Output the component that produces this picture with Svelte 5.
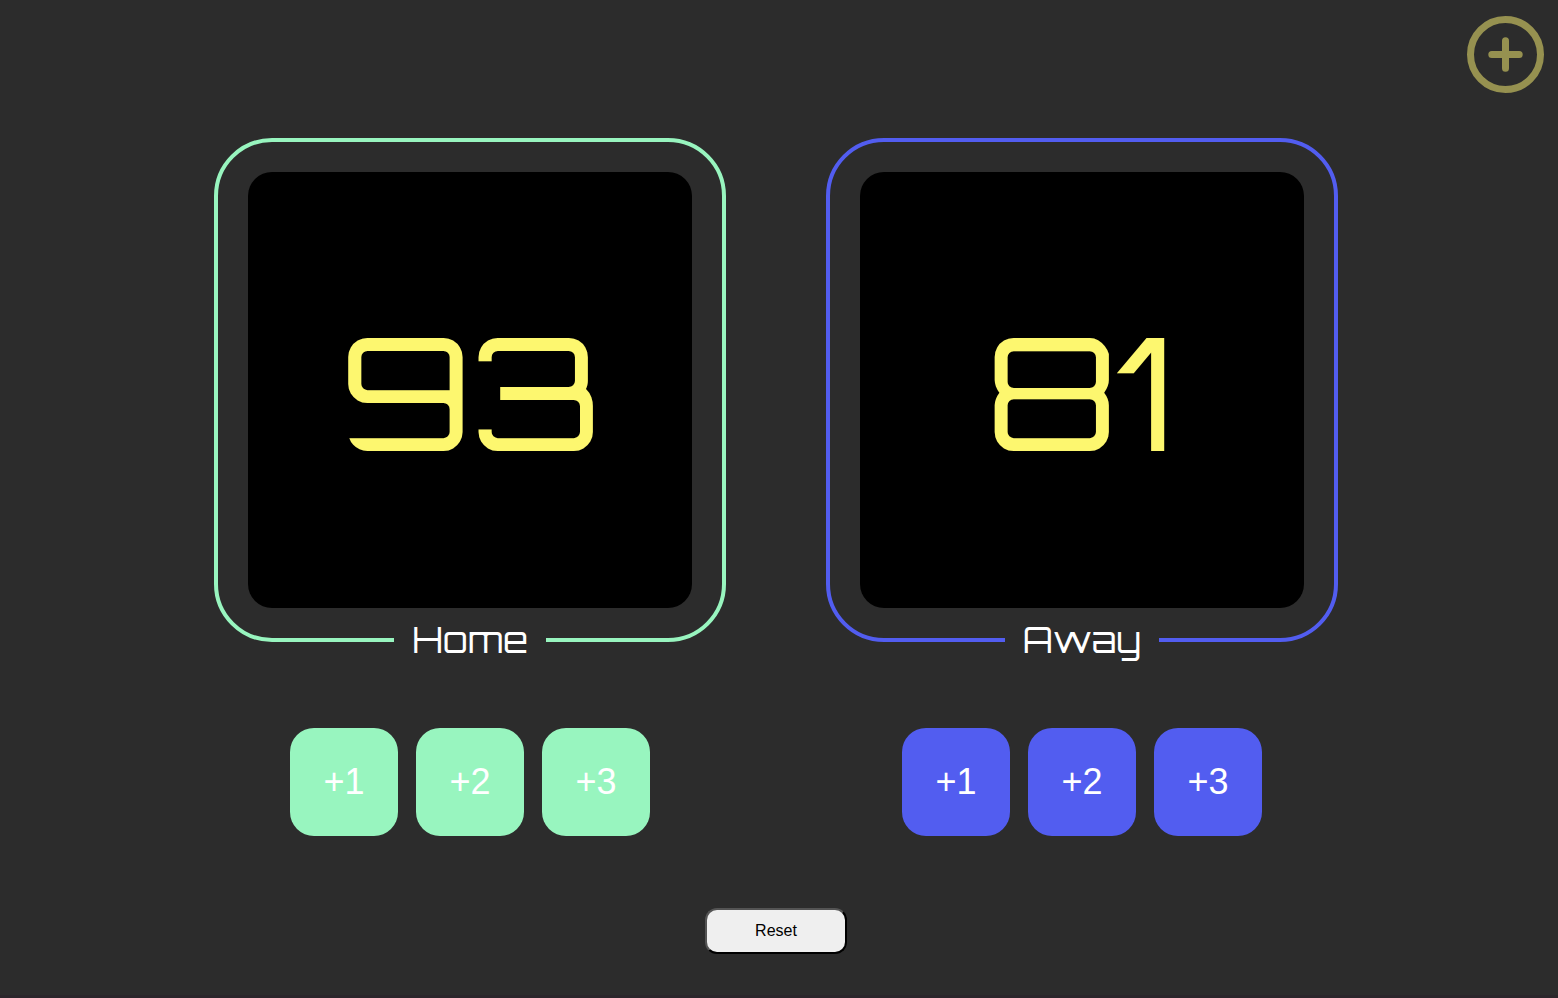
<script>
  let teams = $state([
    { id: 'home', name: 'Home', score: 93 },
    { id: 'away', name: 'Away', score: 81 },
  ]);
  const steps = [1, 2, 3];

  function reset() {
    for (const team of teams) team.score = 0;
  }
</script>

<div class="page">
  <header>
    <button class="add" aria-label="Add">
      <svg viewBox="0 0 77 77" aria-hidden="true">
        <circle cx="38.5" cy="38.5" r="35" />
        <path d="M38.5 24.8v27.4M24.8 38.5h27.4" />
      </svg>
    </button>
  </header>

  <main>
    <div class="teams">
      {#each teams as team (team.id)}
        <section class="team {team.id}">
          <div class="frame">
            <div class="screen">{team.score}</div>
            <h2>{team.name}</h2>
          </div>
          <div class="steps">
            {#each steps as step}
              <button class="step" onclick={() => (team.score += step)}>+{step}</button>
            {/each}
          </div>
        </section>
      {/each}
    </div>
    <button class="reset" onclick={reset}>Reset</button>
  </main>
</div>

<style>
  :global(body) {
    margin: 0;
    background: #2c2c2c;
  }

  .page {
    box-sizing: border-box;
    min-height: 100vh;
    border-bottom: 3px solid #2b262b;
    font-family: 'Liberation Sans', Arial, sans-serif;
  }

  header {
    display: flex;
    justify-content: flex-end;
    padding: 16px 14px 0;
  }

  .add {
    width: 77px;
    height: 77px;
    padding: 0;
    border: 0;
    background: none;
    cursor: pointer;
  }

  .add svg {
    display: block;
    fill: none;
    stroke: #969150;
    stroke-width: 7;
    stroke-linecap: round;
  }

  main {
    display: flex;
    flex-direction: column;
    align-items: center;
    gap: 72px;
    padding: 45px 6px 40px 0;
  }

  .teams {
    display: flex;
    flex-wrap: wrap;
    justify-content: center;
    gap: 72px 100px;
  }

  .team {
    display: flex;
    flex-direction: column;
    align-items: center;
    gap: 86px;
  }

  .home {
    --team: #98f5bf;
  }

  .away {
    --team: #525df0;
  }

  .frame {
    display: flex;
    flex-direction: column;
    align-items: center;
    padding: 30px 30px 0;
    border: 4px solid var(--team);
    border-radius: 58px;
  }

  .screen {
    display: grid;
    place-items: center;
    width: 444px;
    height: 436px;
    border-radius: 24px;
    background: #000;
    color: #fdf76f;
    font: 157px/1 Orbitron, 'DejaVu Sans', sans-serif;
  }

  h2 {
    margin: 10px 0 -24px;
    padding: 0 18px;
    background: #2c2c2c;
    color: #fff;
    font: 36px/44px Orbitron, 'DejaVu Sans', sans-serif;
    text-align: center;
  }

  .steps {
    display: flex;
    gap: 18px;
  }

  .step {
    width: 108px;
    height: 108px;
    padding: 0;
    border: 0;
    border-radius: 24px;
    background: var(--team);
    color: #fff;
    font: 36px 'Liberation Sans', Arial, sans-serif;
    cursor: pointer;
  }

  .reset {
    padding: 12px 48px;
    border: 2px outset #000;
    border-radius: 12px;
    background: #efefef;
    color: #000;
    font: 16px/18px 'Liberation Sans', Arial, sans-serif;
    cursor: pointer;
  }
</style>
